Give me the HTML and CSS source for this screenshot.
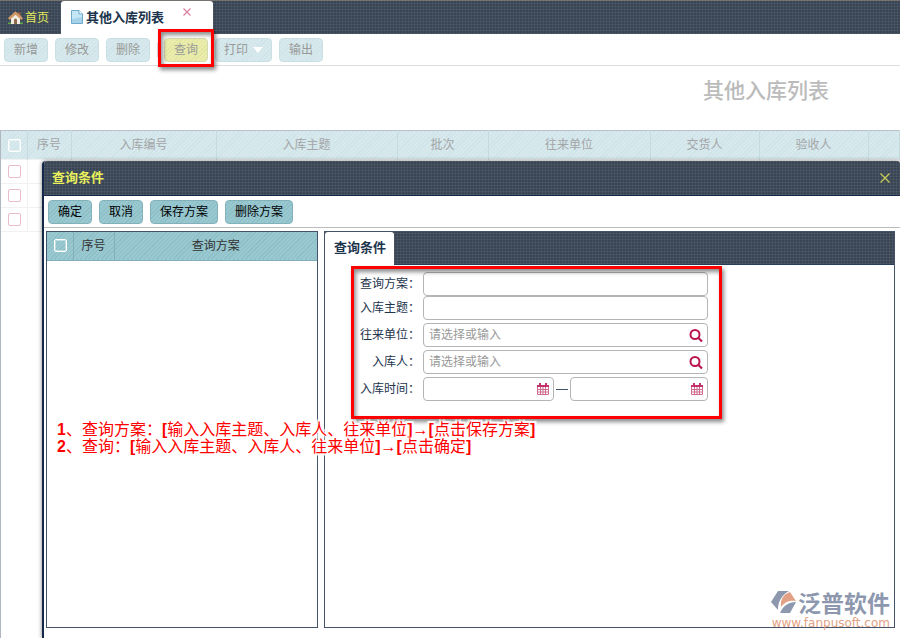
FILE: index.html
```html
<!DOCTYPE html>
<html lang="zh-CN">
<head>
<meta charset="utf-8">
<title>其他入库列表</title>
<link rel="stylesheet" href="styles.css">
</head>
<body>
<header class="topbar">
  <a class="home" href="#">
    <svg width="15" height="14" viewBox="0 0 15 14" aria-hidden="true">
      <path d="M0 11.500h15V13H0z" fill="#5fa843"/>
      <path d="M3 7l4.500-4.500L12 7v6H3z" fill="#f3ede2"/>
      <path d="M10.500 1.500h2v4h-2z" fill="#b55a32"/>
      <path d="M.8 8L7.500 2 14.200 8" fill="none" stroke="#d09a68" stroke-width="2.600"/>
      <path d="M6 13V9a1.500 1.500 0 013 0v4z" fill="#8b6b4c"/>
    </svg>
    <span>首页</span>
  </a>
  <div class="tab">
    <svg width="12" height="15" viewBox="0 0 12 15" aria-hidden="true">
      <path d="M.5.5h7.500l3.500 3.500v9.500H.5z" fill="#c5e6f5" stroke="#6fa9cb"/>
      <path d="M8 .5V4h3.500" fill="#fff" stroke="#6fa9cb"/>
      <path d="M1 9l10-2v6H1z" fill="#a5d2e8"/>
    </svg>
    <a class="tab-name" href="#">其他入库列表</a>
    <button class="tab-close" type="button" aria-label="关闭">
      <svg width="8" height="8" viewBox="0 0 8 8"><path d="M.5.5l7 7M7.500.5l-7 7" stroke="#e07fa2" stroke-width="1.200"/></svg>
    </button>
  </div>
</header>

<nav class="toolbar">
  <button class="btn faded" type="button">新增</button>
  <button class="btn faded" type="button">修改</button>
  <button class="btn faded" type="button">删除</button>
  <span class="divider"></span>
  <div class="marked">
    <button class="btn faded active" type="button">查询</button>
    <span class="mark"></span>
  </div>
  <button class="btn faded" type="button">打印<span class="caret"></span></button>
  <button class="btn faded" type="button">输出</button>
</nav>

<main class="page">
  <h1>其他入库列表</h1>
  <div class="list">
    <table class="grid">
      <colgroup><col class="c-check"><col class="c-no"><col class="c-code"><col class="c-subject"><col class="c-batch"><col class="c-unit"><col class="c-person"><col class="c-person"><col></colgroup>
      <thead>
        <tr><th><input type="checkbox" aria-label="全选"></th><th>序号</th><th>入库编号</th><th>入库主题</th><th>批次</th><th>往来单位</th><th>交货人</th><th>验收人</th><th></th></tr>
      </thead>
      <tbody>
        <tr><td><input type="checkbox" aria-label="选择"></td><td></td><td></td><td></td><td></td><td></td><td></td><td></td><td></td></tr>
        <tr><td><input type="checkbox" aria-label="选择"></td><td></td><td></td><td></td><td></td><td></td><td></td><td></td><td></td></tr>
        <tr><td><input type="checkbox" aria-label="选择"></td><td></td><td></td><td></td><td></td><td></td><td></td><td></td><td></td></tr>
      </tbody>
    </table>
  </div>
</main>

<section class="dialog" role="dialog" aria-labelledby="dialog-title">
  <header class="dialog-head">
    <h2 id="dialog-title">查询条件</h2>
    <button class="dialog-close" type="button" aria-label="关闭">
      <svg width="10" height="10" viewBox="0 0 10 10"><path d="M.5.5l9 9M9.500.5l-9 9" stroke="#c5cc58" stroke-width="1.300"/></svg>
    </button>
  </header>
  <div class="dialog-tools">
    <button class="btn" type="button">确定</button>
    <button class="btn" type="button">取消</button>
    <button class="btn" type="button">保存方案</button>
    <button class="btn" type="button">删除方案</button>
  </div>
  <div class="panels">
    <div class="panel schemes">
      <table class="grid strong">
        <colgroup><col class="c-check"><col class="c-no"><col></colgroup>
        <thead><tr><th><input type="checkbox" aria-label="全选"></th><th>序号</th><th>查询方案</th></tr></thead>
      </table>
    </div>
    <div class="panel criteria">
      <div class="strip"><a class="strip-tab" href="#">查询条件</a></div>
      <form class="form">
        <div class="row tight">
          <label for="scheme">查询方案：</label>
          <div class="field"><input id="scheme" type="text"></div>
        </div>
        <div class="row">
          <label for="subject">入库主题：</label>
          <div class="field"><input id="subject" type="text"></div>
        </div>
        <div class="row">
          <label for="unit">往来单位：</label>
          <div class="field"><input id="unit" type="text" placeholder="请选择或输入">
            <svg class="search" width="14" height="14" viewBox="0 0 14 14" aria-hidden="true"><circle cx="6" cy="5.500" r="4.500" fill="none" stroke="#b8144f" stroke-width="2"/><path d="M9 8.500l4 4" stroke="#b8144f" stroke-width="2.200"/></svg>
          </div>
        </div>
        <div class="row">
          <label for="person">入库人：</label>
          <div class="field"><input id="person" type="text" placeholder="请选择或输入">
            <svg class="search" width="14" height="14" viewBox="0 0 14 14" aria-hidden="true"><circle cx="6" cy="5.500" r="4.500" fill="none" stroke="#b8144f" stroke-width="2"/><path d="M9 8.500l4 4" stroke="#b8144f" stroke-width="2.200"/></svg>
          </div>
        </div>
        <div class="row">
          <label for="from">入库时间：</label>
          <div class="range">
            <div class="field from"><input id="from" type="text">
              <svg class="calendar" width="12" height="12" viewBox="0 0 12 12" aria-hidden="true"><path d="M.5 2.500h11v9H.5zM3.500 4v7.500M6 4v7.500M8.500 4v7.500M.5 6.500h11M.5 9h11" fill="none" stroke="#cf6a8d"/><path d="M0 2h12v2H0zM2 0h2v3H2zM8 0h2v3H8z" fill="#c2326a"/></svg>
            </div>
            <span class="dash"></span>
            <div class="field to"><input id="to" type="text" aria-label="入库时间止">
              <svg class="calendar" width="12" height="12" viewBox="0 0 12 12" aria-hidden="true"><path d="M.5 2.500h11v9H.5zM3.500 4v7.500M6 4v7.500M8.500 4v7.500M.5 6.500h11M.5 9h11" fill="none" stroke="#cf6a8d"/><path d="M0 2h12v2H0zM2 0h2v3H2zM8 0h2v3H8z" fill="#c2326a"/></svg>
            </div>
          </div>
        </div>
        <span class="mark form-mark"></span>
      </form>
    </div>
  </div>
  <div class="notes">
    <p><b>1</b>、查询方案：<b>[</b>输入入库主题、入库人、往来单位<b>]</b>→<b>[</b>点击保存方案<b>]</b></p>
    <p><b>2</b>、查询：<b>[</b>输入入库主题、入库人、往来单位<b>]</b>→<b>[</b>点击确定<b>]</b></p>
  </div>
  <div class="brand">
    <div class="brand-name">
      <svg width="26" height="24" viewBox="0 0 26 24" aria-hidden="true">
        <path d="M7 1h11C11 5 7 11 7 20L0 12z" fill="#8d98ae"/>
        <path d="M10 17C9 9 13 4 19 2l6 9c-7-1-11 1-15 6z" fill="#e2a184"/>
        <path d="M9 23c3-7 8-11 16-11l-6 11z" fill="#8d98ae"/>
      </svg>
      <span>泛普软件</span>
    </div>
    <a href="#">www.fanpusoft.com</a>
  </div>
</section>
</body>
</html>
```
FILE: styles.css
```css
* { box-sizing: border-box; }

:root {
  --navy: #1d344d;
  --weave:
    repeating-linear-gradient(0deg, rgba(255, 255, 255, .06) 0 1px, transparent 1px 3px),
    repeating-linear-gradient(90deg, rgba(255, 255, 255, .06) 0 1px, transparent 1px 3px),
    #394554;
  --teal: repeating-linear-gradient(135deg, #8dbfc7 0 1px, #9ac8d0 1px 3px);
  --teal-pale: repeating-linear-gradient(135deg, #cfe4e8 0 1px, #d7e9ec 1px 3px);
}

body {
  margin: 0;
  min-height: 100vh;
  position: relative;
  display: flex;
  flex-direction: column;
  background: #fff;
  color: var(--navy);
  font: 12px/16px "Liberation Sans", "Noto Sans CJK SC", sans-serif;
}

h1, h2, p { margin: 0; }
a { color: inherit; text-decoration: none; }
svg { display: block; }
button, input { font: inherit; color: inherit; }

.topbar {
  display: flex;
  height: 34px;
  border-top: 1px solid #77746f;
  background: var(--weave);
}

.home {
  display: flex;
  align-items: center;
  gap: 2px;
  width: 61px;
  padding-left: 8px;
  color: #e2e85c;
}

.tab {
  display: flex;
  align-items: center;
  width: 152px;
  padding-left: 10px;
  border-radius: 3px 3px 0 0;
  background: #fff;
}

.tab-name { margin-left: 3px; font-size: 13px; font-weight: bold; }

.tab-close, .dialog-close {
  padding: 0;
  border: 0;
  background: none;
}

.tab-close { align-self: flex-start; margin: 7px 0 0 19px; }

.toolbar {
  display: flex;
  align-items: center;
  gap: 7px;
  height: 32px;
  padding-left: 4px;
  border-bottom: 1px solid #dedede;
}

.btn {
  display: flex;
  align-items: center;
  justify-content: center;
  height: 24px;
  padding: 0 9px;
  border: 1px solid #83b1b9;
  border-radius: 4px;
  background: var(--teal);
  color: #000;
}

.btn.faded {
  min-width: 44px;
  padding: 0 8px;
  border-color: #c9dfe3;
  background: var(--teal-pale);
  color: #999;
}

.btn.active {
  border-color: #d5d9b0;
  background: repeating-linear-gradient(135deg, #e1e5a0 0 1px, #eaedac 1px 3px);
}

.divider { width: 1px; height: 14px; margin-right: -1px; background: #ddd; }
.marked { position: relative; }

.mark {
  position: absolute;
  inset: -9px -6px -5px -6px;
  border: 3px solid #f00;
  box-shadow: 2px 3px 4px rgba(0, 0, 0, .45), inset 2px 3px 4px rgba(0, 0, 0, .45);
  pointer-events: none;
}

.caret {
  margin-left: 5px;
  border: 5px solid transparent;
  border-top: 6px solid #fff;
  border-bottom: 0;
}

.page { flex: 1; display: flex; flex-direction: column; }

.page h1 {
  height: 64px;
  padding: 11px 71px 0 0;
  color: #bbb;
  font: 500 21px/24px "Noto Sans CJK SC", sans-serif;
  text-align: right;
}

.list { flex: 1; border-left: 1px solid #b0b6c2; }

.grid {
  width: 100%;
  border-collapse: collapse;
  table-layout: fixed;
}

.grid th, .grid td { padding: 0; text-align: center; font-weight: normal; }

.grid th {
  height: 29px;
  border-right: 1px solid #c5dbe0;
  color: #a3a5a8;
}

.grid td { height: 24px; border: 1px solid #f1f1f1; border-left: 0; }
.grid thead { background: var(--teal-pale); border-top: 1px solid #bac0c9; border-bottom: 1px solid #c9d4da; }
.grid.strong thead { background: var(--teal); border-top: 0; border-bottom: 1px solid #82b0b9; }
.grid.strong th { height: 28px; border-color: #82b0b9; color: #333; }
.grid.strong th:last-child { border-right: 0; }

.c-check { width: 26px; }
.c-no { width: 44px; }
.c-code { width: 145px; }
.c-subject { width: 181px; }
.c-batch { width: 91px; }
.c-unit { width: 162px; }
.c-person { width: 109px; }
.strong .c-no { width: 41px; }

.grid input {
  appearance: none;
  display: block;
  width: 13px;
  height: 13px;
  margin: 0 0 0 7px;
  border: 1px solid #fff;
  border-radius: 2px;
  box-shadow: inset 0 0 0 1px rgba(255, 255, 255, .4);
}

.grid td input { border-color: #e8bccb; }

.dialog {
  position: absolute;
  inset: 161px 0 0 42px;
  display: flex;
  flex-direction: column;
  padding-bottom: 10px;
  border-left: 2px solid #14294a;
  border-radius: 4px 4px 0 0;
  background: #fff;
  box-shadow: 0 0 4px rgba(0, 0, 0, .5);
}

.dialog-head {
  display: flex;
  align-items: center;
  justify-content: space-between;
  height: 35px;
  padding: 0 10px 0 8px;
  border-bottom: 1px solid #14294a;
  border-radius: 3px 3px 0 0;
  background: var(--weave);
}

.dialog-head h2 { color: #eaf05c; font-size: 13px; line-height: 16px; }

.dialog-tools {
  display: flex;
  align-items: center;
  gap: 7px;
  height: 32px;
  padding-left: 4px;
  border-bottom: 1px solid #bbb;
}

.panels {
  flex: 1;
  display: flex;
  gap: 6px;
  padding: 3px 5px 0 2px;
}

.panel { border: 1px solid #43536a; }
.schemes { width: 272px; }
.criteria { flex: 1; }

.strip {
  display: flex;
  height: 33px;
  border-bottom: 1px solid #263e59;
  background: var(--weave);
}

.strip-tab {
  height: 33px;
  padding: 8px 8px 0 9px;
  border-radius: 3px 3px 0 0;
  background: #fff;
  font-size: 13px;
  font-weight: bold;
}

.form { position: relative; padding-top: 7px; }

.row {
  display: grid;
  grid-template-columns: 95px 285px;
  gap: 3px;
  align-items: center;
  margin-bottom: 3px;
}

.row.tight { margin-bottom: 0; }
.row label { text-align: right; }
.field { position: relative; }
.range { display: flex; align-items: center; justify-content: space-between; }
.field.from { width: 131px; }
.field.to { width: 138px; }
.dash { width: 12px; height: 1px; background: #43536a; }

.field input {
  display: block;
  width: 100%;
  height: 24px;
  padding: 0 28px 0 5px;
  border: 1px solid #b5b5b5;
  border-radius: 4px;
  background: #fff;
}

.field input::placeholder { color: #999; opacity: 1; }
.search, .calendar { position: absolute; top: 6px; right: 5px; }

.form-mark { inset: 1px auto auto 26px; width: 371px; height: 153px; }

.notes {
  position: absolute;
  left: 13px;
  top: 260px;
  color: #f00;
  font: 16px/17px "Liberation Sans", "Noto Sans CJK SC", sans-serif;
  text-shadow: 1px 0 1px #fff, -1px 0 1px #fff, 0 1px 1px #fff, 0 -1px 1px #fff, 2px 2px 1px #fff, -2px -2px 1px #fff, 2px -2px 1px #fff, -2px 2px 1px #fff;
  white-space: nowrap;
}

.brand {
  position: absolute;
  right: 10px;
  bottom: 8px;
  color: #e2a184;
  font: 12px/14px "DejaVu Sans", sans-serif;
  text-align: right;
}

.brand a { display: block; }

.brand-name {
  display: flex;
  align-items: center;
  justify-content: flex-end;
  gap: 1px;
  color: #8d98ae;
  font: bold 23px/28px "Noto Sans CJK SC", sans-serif;
}
```
